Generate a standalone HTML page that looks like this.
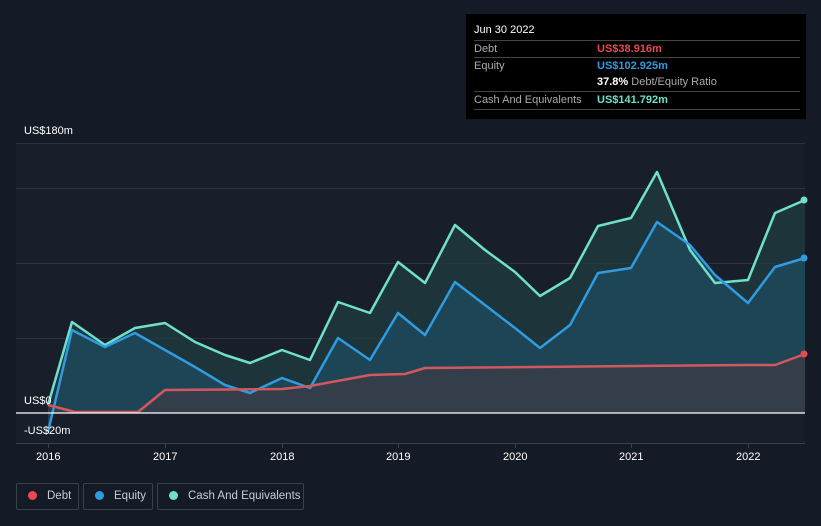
<!DOCTYPE html>
<html><head><meta charset="utf-8"><style>
body{margin:0;width:821px;height:526px;background:#151b26;font-family:"Liberation Sans",sans-serif;overflow:hidden;position:relative}
.t{position:absolute;font-size:11px;color:#fff}
.tip{position:absolute;left:466px;top:14px;width:340px;height:105px;background:#000}
.tip .r{position:absolute;left:8px;width:326px;border-top:1px solid #444;font-size:11px;color:#aaa;height:17px;line-height:17px}
.leg{position:absolute;top:483px;height:27px;border:1px solid #3a404b;border-radius:2px;font-size:11.5px;color:#c8ccd2;line-height:25px;box-sizing:border-box;white-space:nowrap}
.dot{display:inline-block;width:9px;height:9px;border-radius:50%;margin:0 10px 0 11px;vertical-align:-1px}
</style></head><body>
<svg width="821" height="526" style="position:absolute;left:0;top:0">
<rect x="16" y="143" width="789" height="300" fill="#181f2b"/>
<g stroke="#2c333e" stroke-width="1"><line x1="16" y1="143.5" x2="805" y2="143.5"/><line x1="16" y1="188.5" x2="805" y2="188.5"/><line x1="16" y1="263.5" x2="805" y2="263.5"/><line x1="16" y1="338.5" x2="805" y2="338.5"/><line x1="16" y1="443.5" x2="805" y2="443.5" stroke="#3a404b"/></g>
<g stroke="#3a404b"><line x1="48.5" y1="443" x2="48.5" y2="448"/><line x1="165.5" y1="443" x2="165.5" y2="448"/><line x1="282.5" y1="443" x2="282.5" y2="448"/><line x1="398.5" y1="443" x2="398.5" y2="448"/><line x1="515.5" y1="443" x2="515.5" y2="448"/><line x1="631.5" y1="443" x2="631.5" y2="448"/><line x1="748.5" y1="443" x2="748.5" y2="448"/></g>
<polygon fill="#1e3a3e" fill-opacity="0.8" points="48,413 48,405 72,322 105,345 135,328 165,323 195,342 225,355 250,363 282,350 310,360 338,302 370,313 398,262 425,283 455,225 485,250 515,272 540,296 570,278 598,226 631,218 657,172 690,250 715,283 748,280 775,213 805,200 805,413"/>
<polygon fill="#1f4a5c" fill-opacity="0.8" points="48,413 48,432 72,330 105,347 135,333 165,350 195,367 225,385 250,393 282,378 310,388 338,338 370,360 398,313 425,335 455,282 485,305 515,328 540,348 570,325 598,273 631,268 657,222 690,245 715,275 748,303 775,267 805,258 805,413"/>
<polygon fill="#3a3c48" fill-opacity="0.8" points="48,405 75,412 138,412 165,390 282,389 310,386 370,375 405,374 425,368 748,365 775,365 805,354 805,413 48,413"/>
<g fill="none" stroke-width="2.5" stroke-linejoin="round">
<polyline stroke="#6ee0cc" points="48,405 72,322 105,345 135,328 165,323 195,342 225,355 250,363 282,350 310,360 338,302 370,313 398,262 425,283 455,225 485,250 515,272 540,296 570,278 598,226 631,218 657,172 690,250 715,283 748,280 775,213 805,200"/>
<polyline stroke="#2f9be0" points="48,432 72,330 105,347 135,333 165,350 195,367 225,385 250,393 282,378 310,388 338,338 370,360 398,313 425,335 455,282 485,305 515,328 540,348 570,325 598,273 631,268 657,222 690,245 715,275 748,303 775,267 805,258"/>
<polyline stroke="#d0585e" points="48,405 75,412 138,412 165,390 282,389 310,386 370,375 405,374 425,368 748,365 775,365 805,354"/>
</g>
<line x1="16" y1="413" x2="805" y2="413" stroke="#fff" stroke-width="1.2"/>
<circle cx="804" cy="200" r="3.5" fill="#6ee0cc"/><circle cx="804" cy="258" r="3.5" fill="#2f9be0"/><circle cx="804" cy="354" r="3.5" fill="#e84a4f"/>
</svg>
<div class="t" style="left:24px;top:125px">US$180m</div>
<div class="t" style="left:24px;top:395px">US$0</div>
<div class="t" style="left:24px;top:425px">-US$20m</div>
<div class="t" style="left:36px;top:451px">2016</div><div class="t" style="left:153px;top:451px">2017</div><div class="t" style="left:270px;top:451px">2018</div><div class="t" style="left:386px;top:451px">2019</div><div class="t" style="left:503px;top:451px">2020</div><div class="t" style="left:619px;top:451px">2021</div><div class="t" style="left:736px;top:451px">2022</div>
<div class="tip">
<div style="position:absolute;left:8px;top:10px;font-size:11px;color:#fff">Jun 30 2022</div>
<div class="r" style="top:26px">Debt<span style="position:absolute;left:123px;color:#e84a4f;font-weight:bold">US$38.916m</span></div>
<div class="r" style="top:43px">Equity<span style="position:absolute;left:123px;color:#2f9be0;font-weight:bold">US$102.925m</span></div>
<div class="r" style="top:60px;border:0"><span style="position:absolute;left:123px;color:#fff"><b>37.8%</b> <span style="color:#aaa">Debt/Equity Ratio</span></span></div>
<div class="r" style="top:77px">Cash And Equivalents<span style="position:absolute;left:123px;color:#6ee0cc;font-weight:bold">US$141.792m</span></div>
<div style="position:absolute;left:8px;top:95px;width:326px;border-top:1px solid #444"></div>
</div>
<div class="leg" style="left:16px;width:63px"><span class="dot" style="background:#e84a4f"></span>Debt</div>
<div class="leg" style="left:83px;width:70px"><span class="dot" style="background:#2f9be0"></span>Equity</div>
<div class="leg" style="left:157px;width:147px"><span class="dot" style="background:#6ee0cc"></span>Cash And Equivalents</div>
</body></html>
